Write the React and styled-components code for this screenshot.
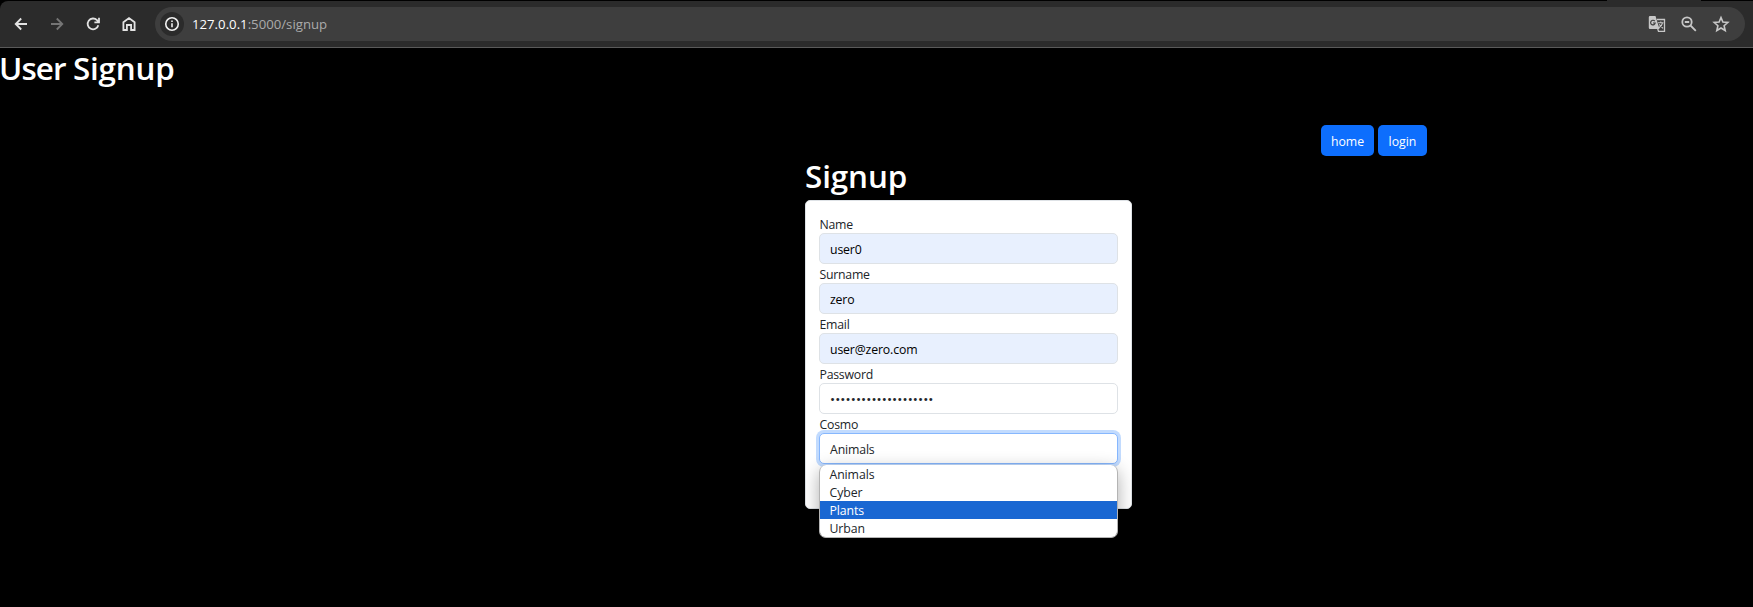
import React from "react";
import styled, { createGlobalStyle } from "styled-components";

const Global = createGlobalStyle`
  *, *::before, *::after { box-sizing: border-box; }
  html, body { margin: 0; background: #000; }
  body {
    font-family: "Open Sans", "Noto Sans", sans-serif;
    font-size: 12.3px;
    line-height: 19px;
    color: #212529;
    overflow: hidden;
  }
`;

const Window = styled.div`
  height: 607px;
  background: #000;
`;

const TabFoot = styled.div`
  width: 94px;
  height: 1px;
  margin-left: 1607px;
  background: #2b2b2b;
`;

const Toolbar = styled.header`
  height: 47px;
  display: flex;
  align-items: center;
  padding: 0 8px 0 11px;
  background: #2b2b2b;
  border-bottom: 1px solid #5a5a5a;
  border-radius: 8px 0 0 0;
`;

const NavIcon = styled.span`
  width: 20px;
  height: 20px;
  margin-right: 16px;
  color: ${(p) => (p.$muted ? "#757575" : "#e3e3e3")};
  svg { display: block; }
`;

const AddressBar = styled.div`
  flex: 1;
  height: 34px;
  display: flex;
  align-items: center;
  padding: 0 14px 0 5px;
  border-radius: 17px;
  background: #3e3e3e;
  color: #c7c7c7;
`;

const SiteInfo = styled.span`
  width: 24px;
  height: 24px;
  display: flex;
  align-items: center;
  justify-content: center;
  border-radius: 50%;
  background: #2b2b2b;
  color: #f0f0f0;
`;

const Url = styled.span`
  flex: 1;
  margin: 1px 0 0 8px;
  font-size: 13.2px;
  color: #ababab;
  strong { font-weight: 400; color: #fff; }
`;

const BarActions = styled.div`
  display: flex;
  gap: 12px;
  svg { display: block; }
`;

const Heading = styled.h1`
  margin: 0;
  font-size: 31.4px;
  line-height: 38px;
  font-weight: 600;
  letter-spacing: ${(p) => p.$spacing};
  color: #fff;
  white-space: nowrap;
`;

const FirstWord = styled.span`
  margin-left: -1px;
  letter-spacing: -0.9px;
`;

const Page = styled.main`
  padding-top: 1px;
`;

const Links = styled.nav`
  display: flex;
  gap: 4px;
  margin: 38px 0 0 1321px;
`;

const LinkButton = styled.a`
  width: ${(p) => p.$width}px;
  height: 31px;
  display: flex;
  align-items: center;
  justify-content: center;
  padding-top: 1px;
  border-radius: 5px;
  background: #0d6efd;
  color: #fff;
`;

const Signup = styled.section`
  width: 327px;
  margin: 1px 0 0 805px;
`;

const Card = styled.form`
  height: 309px;
  margin-top: 5px;
  padding: 13px 13px 0;
  background: #fff;
  border: 1px solid #dee2e6;
  border-radius: 5px;
`;

const Field = styled.div`
  position: relative;
  height: 50px;
`;

const Label = styled.label`
  display: block;
  height: 19px;
  padding: 1px 0 0 0.5px;
  line-height: 20px;
  letter-spacing: -0.25px;
`;

const Control = styled.div`
  height: 31px;
  padding: 1px 10px 0;
  line-height: 29px;
  border: 1px solid ${(p) => (p.$focus ? "#86b7fe" : "#dee2e6")};
  border-radius: 5px;
  background: ${(p) => (p.$filled ? "#e8f0fe" : "#fff")};
  box-shadow: ${(p) => (p.$focus ? "0 0 0 3px #c2dbfe" : "none")};
  color: ${(p) => (p.$filled ? "#000" : "#212529")};
  letter-spacing: ${(p) => (p.$filled ? "-0.15px" : "-0.15px")};
`;

const Dots = styled.span`
  display: block;
  line-height: 29px;
  font-size: 13.5px;
  letter-spacing: 0.1px;
`;

const Submit = styled.div`
  width: 62px;
  height: 31px;
  margin-left: 9px;
  border-radius: 5px;
  background: #0d6efd;
`;

const Menu = styled.ul`
  position: absolute;
  z-index: 2;
  top: 51px;
  left: 0;
  width: 299px;
  height: 73px;
  margin: 0;
  padding: 0;
  list-style: none;
  overflow: hidden;
  background: #fff;
  border: 1px solid #b4b4b4;
  border-top: 0;
  border-radius: 7px;
  box-shadow: 0 5px 18px rgba(0, 0, 0, 0.32);
`;

const Option = styled.li`
  height: 18px;
  padding-left: 9.5px;
  line-height: 19px;
  letter-spacing: -0.1px;
  background: ${(p) => (p.$active ? "#1967d2" : "transparent")};
  color: ${(p) => (p.$active ? "#fff" : "#212529")};
`;

const Glyph = ({ size = 20, children, ...rest }) => (
  <svg width={size} height={size} viewBox="0 0 20 20" fill="none" stroke="currentColor" strokeWidth="1.8" {...rest}>
    {children}
  </svg>
);

const fields = [
  { label: "Name", value: "user0" },
  { label: "Surname", value: "zero" },
  { label: "Email", value: "user@zero.com" },
];

const options = ["Animals", "Cyber", "Plants", "Urban"];

export default function App() {
  return (
    <Window>
      <Global />
      <TabFoot />
      <Toolbar>
        <NavIcon><Glyph><path d="M16 10H5M10.2 4.5 4.7 10l5.5 5.5" /></Glyph></NavIcon>
        <NavIcon $muted><Glyph><path d="M4 10h11M9.8 4.5l5.5 5.5-5.5 5.5" /></Glyph></NavIcon>
        <NavIcon><Glyph><path d="M15.3 11.2A5.4 5.4 0 1 1 14 6.2l1.5 1.6M16 3.8v4.5h-4.6" /></Glyph></NavIcon>
        <NavIcon><Glyph><path d="M4.4 16V8.2L10 4l5.6 4.2V16h-3.5v-5H7.9v5z" /></Glyph></NavIcon>
        <AddressBar>
          <SiteInfo>
            <Glyph size={16}><circle cx="10" cy="10" r="7.8" strokeWidth="2" /><path d="M10 9v5M10 5.6v2" strokeWidth="2" /></Glyph>
          </SiteInfo>
          <Url><strong>127.0.0.1</strong>:5000/signup</Url>
          <BarActions>
            <Glyph>
              <path d="M3 2h5.5l4 13H3a1.2 1.2 0 0 1-1.2-1.2V3.2A1.2 1.2 0 0 1 3 2z" fill="currentColor" stroke="none" />
              <path d="M10 5.5h7.5v11.8h-6l-.8-2.3" strokeWidth="1.3" />
              <path d="M7.8 7.2A2.3 2.3 0 1 0 8.2 9H6" stroke="#3e3e3e" strokeWidth="1.2" />
              <path d="M11 8.8h5.5M13.8 7.6v1.2M15.5 8.8c-.5 2.4-2 4-3.5 5M12.2 10.3l3.8 4" strokeWidth="1.1" />
            </Glyph>
            <Glyph><circle cx="8" cy="8" r="4.7" /><path d="m11.5 11.5 5.3 5.3M5.8 8h4.4" /></Glyph>
            <Glyph strokeWidth="1.6"><path d="m10 3.6 1.9 4.5 4.9.4-3.7 3.2 1.1 4.8L10 14l-4.2 2.5 1.1-4.8-3.7-3.2 4.9-.4z" /></Glyph>
          </BarActions>
        </AddressBar>
      </Toolbar>
      <Page>
        <Heading $spacing="-0.2px"><FirstWord>User </FirstWord>Signup</Heading>
        <Links>
          <LinkButton $width={53}>home</LinkButton>
          <LinkButton $width={49}>login</LinkButton>
        </Links>
        <Signup>
          <Heading $spacing="-0.1px">Signup</Heading>
          <Card>
            {fields.map((f) => (
              <Field key={f.label}>
                <Label>{f.label}</Label>
                <Control $filled>{f.value}</Control>
              </Field>
            ))}
            <Field>
              <Label>Password</Label>
              <Control><Dots>{"•".repeat(20)}</Dots></Control>
            </Field>
            <Field>
              <Label>Cosmo</Label>
              <Control $focus>Animals</Control>
              <Menu>
                {options.map((o) => <Option key={o} $active={o === "Plants"}>{o}</Option>)}
              </Menu>
            </Field>
            <Submit />
          </Card>
        </Signup>
      </Page>
    </Window>
  );
}
